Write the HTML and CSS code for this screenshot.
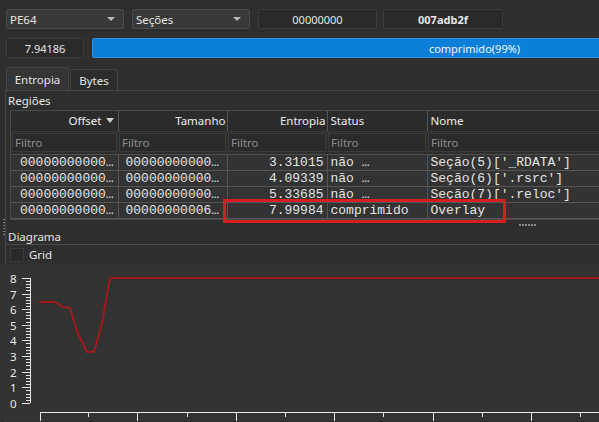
FILE: index.html
```html
<!DOCTYPE html>
<html lang="pt">
<head>
<meta charset="utf-8">
<title>Entropia</title>
<link rel="stylesheet" href="styles.css">
</head>
<body>
<div class="window">
  <div class="toolbar">
    <div class="combo w118"><span>PE64</span><span class="arrow"></span></div>
    <div class="combo w118"><span>Seções</span><span class="arrow"></span></div>
    <div class="field w119">00000000</div>
    <div class="field w120 bold">007adb2f</div>
  </div>
  <div class="toolbar row2">
    <div class="field value">7.94186</div>
    <div class="progress"><span>comprimido(99%)</span></div>
  </div>

  <div class="tabs">
    <div class="tab active">Entropia</div>
    <div class="tab">Bytes</div>
  </div>

  <div class="panel">
    <span class="grip-v"></span>
    <div class="label">Regiões</div>
    <div class="table-wrap">
      <table class="regions">
        <colgroup>
          <col class="c-off"><col class="c-size"><col class="c-ent"><col class="c-status"><col class="c-name">
        </colgroup>
        <thead>
          <tr class="head">
            <th class="r">Offset <span class="sort"></span></th>
            <th class="r">Tamanho</th>
            <th class="r">Entropia</th>
            <th>Status</th>
            <th>Nome</th>
          </tr>
          <tr class="filters">
            <td><div class="filter">Filtro</div></td>
            <td><div class="filter">Filtro</div></td>
            <td><div class="filter">Filtro</div></td>
            <td><div class="filter">Filtro</div></td>
            <td><div class="filter">Filtro</div></td>
          </tr>
        </thead>
        <tbody>
          <tr><td>00000000000…</td><td>00000000000…</td><td class="r">3.31015</td><td>não …</td><td>Seção(5)['_RDATA']</td></tr>
          <tr><td>00000000000…</td><td>00000000000…</td><td class="r">4.09339</td><td>não …</td><td>Seção(6)['.rsrc']</td></tr>
          <tr><td>00000000000…</td><td>00000000000…</td><td class="r">5.33685</td><td>não …</td><td>Seção(7)['.reloc']</td></tr>
          <tr><td>00000000000…</td><td>00000000006…</td><td class="r">7.99984</td><td>comprimido</td><td>Overlay</td></tr>
        </tbody>
      </table>
      <div class="highlight"></div>
    </div>
    <div class="splitter"><span class="dots"></span></div>

    <div class="group-title">Diagrama</div>
    <label class="check"><span class="box"></span>Grid</label>

    <svg class="chart" width="599" height="157" viewBox="0 0 599 157">
      <g class="axis" stroke="#e8e8e8" stroke-width="1" fill="none">
        <path d="M30.5 14V139"/>
        <path d="M22 14.5H30M22 30.5H30M22 45.5H30M22 61.5H30M22 76.5H30M22 92.5H30M22 108.5H30M22 123.5H30M22 139.5H30"/>
        <path d="M26 17.5H30M26 20.5H30M26 23.5H30M26 26.5H30M26 33.5H30M26 36.5H30M26 39.5H30M26 42.5H30M26 48.5H30M26 51.5H30M26 54.5H30M26 58.5H30M26 64.5H30M26 67.5H30M26 70.5H30M26 73.5H30M26 79.5H30M26 83.5H30M26 86.5H30M26 89.5H30M26 95.5H30M26 98.5H30M26 101.5H30M26 105.5H30M26 111.5H30M26 114.5H30M26 117.5H30M26 120.5H30M26 126.5H30M26 130.5H30M26 133.5H30M26 136.5H30"/>
        <path d="M40 148.5H599"/>
        <path d="M40.5 148V157M137.5 148V157M236.5 148V157M334.5 148V157M433.5 148V157M531.5 148V157"/>
        <path d="M88.5 148V153M187.5 148V153M285.5 148V153M383.5 148V153M482.5 148V153M580.5 148V153"/>
      </g>
      <g class="ticks" fill="#e8e8e8">
        <text x="10" y="19">8</text>
        <text x="10" y="35">7</text>
        <text x="10" y="50">6</text>
        <text x="10" y="66">5</text>
        <text x="10" y="81">4</text>
        <text x="10" y="97">3</text>
        <text x="10" y="113">2</text>
        <text x="10" y="128">1</text>
        <text x="10" y="144">0</text>
      </g>
      <polyline points="39,38 55,38 63,43 70,44 78,70 87,88 94,88 102,59 110,14 599,14" fill="none" stroke="#a3191b" stroke-width="2" stroke-linejoin="round"/>
    </svg>
  </div>
</div>
</body>
</html>
```

FILE: styles.css
```css
* { box-sizing: border-box; }

html, body {
  margin: 0;
  background: #2e2e2e;
  overflow: hidden;
}

body {
  width: 599px;
  height: 422px;
  font-family: "Noto Sans", "Open Sans", sans-serif;
  font-size: 11px;
  color: #e6e6e6;
}

.window {
  width: 880px;
}

/* top toolbars */
.toolbar {
  display: flex;
  align-items: center;
  padding: 9px 0 0 6px;
  gap: 8px;
}
.toolbar.row2 { padding-top: 9px; }

.combo, .field {
  height: 20px;
  border-radius: 2px;
  display: flex;
  align-items: center;
}
.combo {
  background: #393939;
  border: 1px solid #4a4a4a;
  padding: 0 8px 0 3px;
  justify-content: space-between;
  font-size: 11.5px;
}
.arrow {
  width: 0;
  height: 0;
  border-left: 4px solid transparent;
  border-right: 4px solid transparent;
  border-top: 4px solid #b8b8b8;
}
.field {
  background: #2a2a2a;
  border: 1px solid #3c3c3c;
  justify-content: center;
  font-size: 11px;
}
.w118 { width: 118px; }
.w119 { width: 119px; }
.w120 { width: 120px; margin-left: -2px; }
.bold { font-weight: 700; }
.field.value { width: 78px; }

.progress {
  flex: none;
  width: 765px;
  height: 20px;
  background: #0c7fd9;
  border: 1px solid #2a95e8;
  border-radius: 2px;
  display: flex;
  align-items: center;
  justify-content: center;
  color: #eef6ff;
  font-size: 11px;
}

/* tabs */
.tabs {
  display: flex;
  align-items: flex-end;
  margin: 9px 0 0 6px;
  height: 23px;
}
.tab {
  height: 21px;
  padding: 0 10px;
  border: 1px solid #454545;
  border-bottom: none;
  border-radius: 3px 3px 0 0;
  background: #2c2c2c;
  display: flex;
  align-items: center;
  font-size: 11.5px;
}
.tab.active {
  height: 23px;
  background: #353535;
  width: 63px;
  justify-content: center;
}
.tab + .tab { margin-left: 1px; width: 48px; justify-content: center; }

/* tab page */
.panel {
  position: relative;
  margin-left: 5px;
  border-top: 1px solid #464646;
  border-left: 1px solid #454545;
  height: 332px;
}
.grip-v {
  position: absolute;
  left: -3px;
  top: 128px;
  width: 2px;
  height: 16px;
  background: repeating-linear-gradient(#777 0 1px, transparent 1px 3px);
}
.label {
  height: 19px;
  padding-left: 2px;
  display: flex;
  align-items: center;
  font-size: 11.5px;
}

/* regions table */
.table-wrap {
  position: relative;
  margin-left: 4px;
  border: 1px solid #4a4a4a;
  border-right: none;
  background: #333;
}
.regions {
  border-collapse: collapse;
  table-layout: fixed;
  width: 880px;
}
.c-off { width: 107px; }
.c-size { width: 109px; }
.c-ent { width: 100px; }
.c-status { width: 100px; }
.c-name { width: 564px; }

.regions th {
  height: 20px;
  font-weight: 400;
  font-size: 11.5px;
  color: #ededed;
  text-align: left;
  padding: 0 3px;
  background: #2b2b2b;
  border-right: 1px solid #555;
  border-bottom: 1px solid #3a3a3a;
  white-space: nowrap;
  overflow: hidden;
}
.regions th.r { text-align: right; padding-right: 1px; }
.regions th:first-child { padding-right: 4px; }
.sort {
  display: inline-block;
  width: 0;
  height: 0;
  margin-left: 1px;
  vertical-align: 2px;
  border-left: 4px solid transparent;
  border-right: 4px solid transparent;
  border-top: 5px solid #d0d0d0;
}

.filters td {
  height: 23px;
  padding: 1px 1px 2px;
  background: #2e2e2e;
  border-bottom: 1px solid #4e4e4e;
}
.filter {
  height: 19px;
  background: #2a2a2a;
  border: 1px solid #3b3b3b;
  color: #8c8c8c;
  padding-left: 2px;
  display: flex;
  align-items: center;
  font-size: 11.5px;
}

.regions tbody td {
  height: 16px;
  padding: 0 3px 0 3px;
  font-family: "Liberation Mono", "Courier New", monospace;
  font-size: 13px;
  line-height: 15px;
  color: #e4e4e4;
  border: 1px solid #555;
  border-top: none;
  border-left: none;
  white-space: nowrap;
  overflow: hidden;
}
.regions tbody td:first-child { padding-left: 9px; }
.regions tbody td:nth-child(2) { padding-left: 7px; }
.regions tbody td.r { text-align: right; padding-right: 3px; }

.highlight {
  position: absolute;
  left: 212px;
  top: 88px;
  width: 283px;
  height: 24px;
  border: 3px solid #d41f22;
  border-radius: 1px;
}

.splitter {
  height: 10px;
  display: flex;
  align-items: center;
}
.dots {
  margin-left: 513px;
  width: 17px;
  height: 2px;
  background: repeating-linear-gradient(90deg, #8a8a8a 0 2px, transparent 2px 3px);
}

/* chart group */
.group-title {
  height: 15px;
  padding-left: 2px;
  border-bottom: 1px solid #4a4a4a;
  display: flex;
  align-items: center;
  font-size: 11.5px;
}
.check {
  display: flex;
  align-items: center;
  height: 18px;
  padding-left: 4px;
  margin-top: 1px;
  font-size: 11.5px;
}
.box {
  width: 14px;
  height: 14px;
  border: 1px solid #3c3c3c;
  background: #2a2a2a;
  margin-right: 5px;
}

.chart {
  display: block;
  margin-left: -6px;
  background: #333;
}
.chart text {
  font-family: "Noto Sans", "Open Sans", sans-serif;
  font-size: 11.5px;
}
```
